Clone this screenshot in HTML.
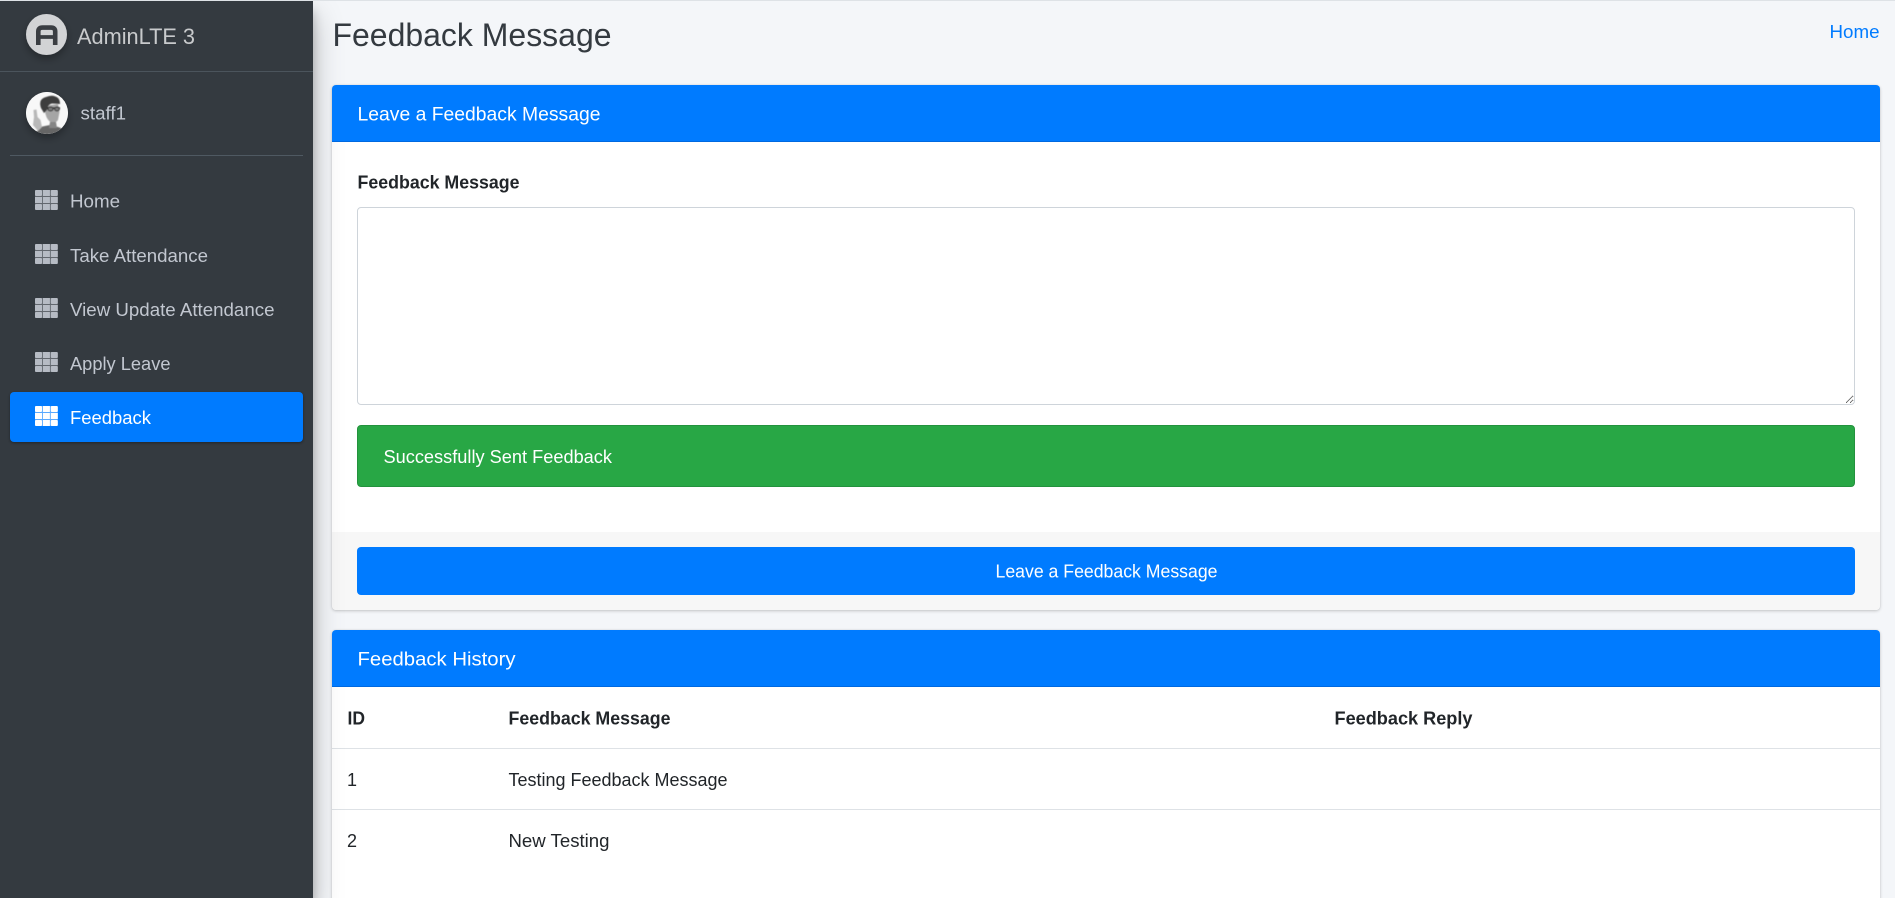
<!DOCTYPE html>
<html lang="en">
<head>
<meta charset="utf-8">
<title>Feedback Message</title>
<style>
html,body{margin:0;padding:0;width:1895px;height:898px;overflow:hidden;background:#f4f6f9;font-family:"Liberation Sans",sans-serif}
*{box-sizing:border-box}
#page{position:absolute;left:0;top:0;width:1895px;height:898px;overflow:hidden;background:#f4f6f9}
#topline{position:absolute;left:0;top:0;width:1895px;height:1px;background:#dee2e6;z-index:7}
#side{position:absolute;left:0;top:1px;width:313px;height:897px;background:#343a40;box-shadow:0 14px 28px rgba(0,0,0,.25),0 10px 10px rgba(0,0,0,.22);z-index:5}
.hr1{position:absolute;left:0;top:70px;width:313px;height:1px;background:#4b545c}
.hr2{position:absolute;left:10px;top:154px;width:293px;height:1px;background:#4f5962}
.pill{position:absolute;left:10px;top:391px;width:293px;height:50px;background:#007bff;border-radius:4px;box-shadow:0 1px 3px rgba(0,0,0,.12),0 1px 2px rgba(0,0,0,.24)}
.card{position:absolute;left:332px;width:1548px;background:#fff;border-radius:4px;box-shadow:0 0 1px rgba(0,0,0,.125),0 1px 3px rgba(0,0,0,.2)}
.chead{position:absolute;left:332px;width:1548px;height:57px;background:#007bff;border-radius:4px 4px 0 0;z-index:6;border-bottom:1px solid #0069e0}
.foot{position:absolute;left:0;top:447px;width:1548px;height:78px;background:#f7f7f7;border-radius:0 0 4px 4px}
textarea{position:absolute;left:25px;top:122px;width:1498px;height:198px;border:1px solid #ced4da;border-radius:4px;background:#fff;outline:0;margin:0;padding:0}
.alert{position:absolute;left:25px;top:340px;width:1498px;height:62px;background:#28a745;border:1px solid #23923d;border-radius:4px}
.btn{position:absolute;left:25px;top:15px;width:1498px;height:48px;background:#007bff;border:0;border-radius:4px}
.rule{position:absolute;left:0;width:1548px;height:1px;background:#dee2e6}
#txt{position:absolute;left:0;top:0;z-index:10;pointer-events:none}
text{font-family:"Liberation Sans",sans-serif}
</style>
</head>
<body>
<div id="page">
<div id="topline"></div>

<div class="card" style="top:85px;height:525px">
  <textarea></textarea>
  <div class="alert"></div>
  <div class="foot"><button class="btn"></button></div>
</div>
<div class="chead" style="top:85px"></div>

<div class="card" style="top:630px;height:300px">
  <div class="rule" style="top:118px"></div>
  <div class="rule" style="top:179px"></div>
</div>
<div class="chead" style="top:630px"></div>

<div id="side">
  <div class="hr1"></div>
  <div class="hr2"></div>
  <div class="pill"></div>
</div>

<svg id="txt" width="1895" height="898" viewBox="0 0 1895 898" xmlns="http://www.w3.org/2000/svg">
  <defs>
    <filter id="sh" x="-40%" y="-40%" width="180%" height="200%"><feDropShadow dx="0" dy="4" stdDeviation="4" flood-color="#000" flood-opacity=".3"/></filter>
    <filter id="soft"><feGaussianBlur stdDeviation=".55"/></filter>
    <clipPath id="av"><circle cx="47" cy="113" r="21"/></clipPath>
    <g id="grid">
      <rect x="0" y="0" width="22.8" height="20" rx="1.5" opacity=".35"/>
      <rect x="0" y="0" width="7" height="6" rx="1"/><rect x="7.9" y="0" width="7" height="6"/><rect x="15.8" y="0" width="7" height="6" rx="1"/>
      <rect x="0" y="7" width="7" height="6"/><rect x="7.9" y="7" width="7" height="6"/><rect x="15.8" y="7" width="7" height="6"/>
      <rect x="0" y="14" width="7" height="6" rx="1"/><rect x="7.9" y="14" width="7" height="6"/><rect x="15.8" y="14" width="7" height="6" rx="1"/>
    </g>
  </defs>

  <!-- brand logo -->
  <circle cx="46.5" cy="34.5" r="20.5" fill="#d2d3d5" filter="url(#sh)"/>
  <path d="M38.3 45V31.5Q38.3 27.6 42.5 27.6H51Q55.2 27.6 55.2 31.5V45" fill="none" stroke="#3a3d42" stroke-width="4.6"/>
  <path d="M38.3 37H55.2" fill="none" stroke="#3a3d42" stroke-width="3.8"/>

  <!-- avatar -->
  <circle cx="47" cy="113" r="21" fill="#fff" filter="url(#sh)"/>
  <g clip-path="url(#av)">
    <circle cx="47" cy="113" r="21" fill="#f8f8f8"/>
    <g filter="url(#soft)">
      <path d="M34 136L40 127L50 125L58 127L66 130V138H34Z" fill="#666"/>
      <path d="M33.5 110L36.5 109.5L37.5 117L40.5 120L42 127L38 131L33 125L34 117Z" fill="#b8b8b8"/>
      <path d="M44 106L58 104L59.5 112L58 120Q55 124 51 122.5Q47 120 45.5 114Z" fill="#a5a5a5"/>
      <path d="M50 122L56 122L57 128L49 128Z" fill="#858585"/>
      <path d="M41 108Q38 99 46 97Q53 94 58 98Q60 100 60 104L52 103.5Q48 104 47 110L44 113Z" fill="#3c3c3c"/>
      <path d="M47 108H60" stroke="#222" stroke-width="1.4" fill="none"/>
      <ellipse cx="50.5" cy="109" rx="2.6" ry="2" fill="#777" stroke="#222" stroke-width=".9"/>
      <ellipse cx="57" cy="109" rx="2.4" ry="2" fill="#777" stroke="#222" stroke-width=".9"/>
    </g>
  </g>

  <!-- nav icons -->
  <use href="#grid" x="35" y="190" fill="#c2c7d0" opacity=".92"/>
  <use href="#grid" x="35" y="244" fill="#c2c7d0" opacity=".92"/>
  <use href="#grid" x="35" y="298" fill="#c2c7d0" opacity=".92"/>
  <use href="#grid" x="35" y="352" fill="#c2c7d0" opacity=".92"/>
  <use href="#grid" x="35" y="406" fill="#ffffff"/>

  <!-- sidebar text -->
  <text x="77" y="44" font-size="22" fill="#c8cacc" textLength="118" lengthAdjust="spacingAndGlyphs">AdminLTE 3</text>
  <text x="80.5" y="119.5" font-size="18" fill="#c2c7d0" textLength="45.5" lengthAdjust="spacingAndGlyphs">staff1</text>
  <text x="70" y="207.5" font-size="18" fill="#c2c7d0" textLength="50" lengthAdjust="spacingAndGlyphs">Home</text>
  <text x="70" y="262" font-size="18" fill="#c2c7d0" textLength="138" lengthAdjust="spacingAndGlyphs">Take Attendance</text>
  <text x="70" y="316" font-size="18" fill="#c2c7d0" textLength="204.5" lengthAdjust="spacingAndGlyphs">View Update Attendance</text>
  <text x="70" y="370" font-size="18" fill="#c2c7d0" textLength="100.5" lengthAdjust="spacingAndGlyphs">Apply Leave</text>
  <text x="70" y="424" font-size="18" fill="#ffffff" textLength="81" lengthAdjust="spacingAndGlyphs">Feedback</text>

  <!-- content header -->
  <text x="332.5" y="46" font-size="32" fill="#343a40" textLength="279" lengthAdjust="spacingAndGlyphs">Feedback Message</text>
  <text x="1829.5" y="38" font-size="18" fill="#007bff" textLength="50" lengthAdjust="spacingAndGlyphs">Home</text>

  <!-- card 1 -->
  <text x="357.5" y="120.5" font-size="19.5" fill="#ffffff" textLength="243" lengthAdjust="spacingAndGlyphs">Leave a Feedback Message</text>
  <text x="357.5" y="188.5" font-size="18" font-weight="700" fill="#212529" textLength="162" lengthAdjust="spacingAndGlyphs">Feedback Message</text>
  <text x="383.5" y="463" font-size="18" fill="#ffffff" textLength="228.5" lengthAdjust="spacingAndGlyphs">Successfully Sent Feedback</text>
  <text x="995.5" y="577.5" font-size="18" fill="#ffffff" textLength="222" lengthAdjust="spacingAndGlyphs">Leave a Feedback Message</text>

  <!-- card 2 -->
  <text x="357.5" y="665.5" font-size="19.5" fill="#ffffff" textLength="158" lengthAdjust="spacingAndGlyphs">Feedback History</text>
  <text x="347.5" y="724.5" font-size="18" font-weight="700" fill="#212529" textLength="17.5" lengthAdjust="spacingAndGlyphs">ID</text>
  <text x="508.5" y="724.5" font-size="18" font-weight="700" fill="#212529" textLength="162" lengthAdjust="spacingAndGlyphs">Feedback Message</text>
  <text x="1334.5" y="724.5" font-size="18" font-weight="700" fill="#212529" textLength="138" lengthAdjust="spacingAndGlyphs">Feedback Reply</text>
  <text x="347" y="786" font-size="18" fill="#212529">1</text>
  <text x="508.5" y="786" font-size="18" fill="#212529" textLength="219" lengthAdjust="spacingAndGlyphs">Testing Feedback Message</text>
  <text x="347" y="847" font-size="18" fill="#212529">2</text>
  <text x="508.5" y="847" font-size="18" fill="#212529" textLength="101" lengthAdjust="spacingAndGlyphs">New Testing</text>
</svg>
</div>
</body>
</html>
